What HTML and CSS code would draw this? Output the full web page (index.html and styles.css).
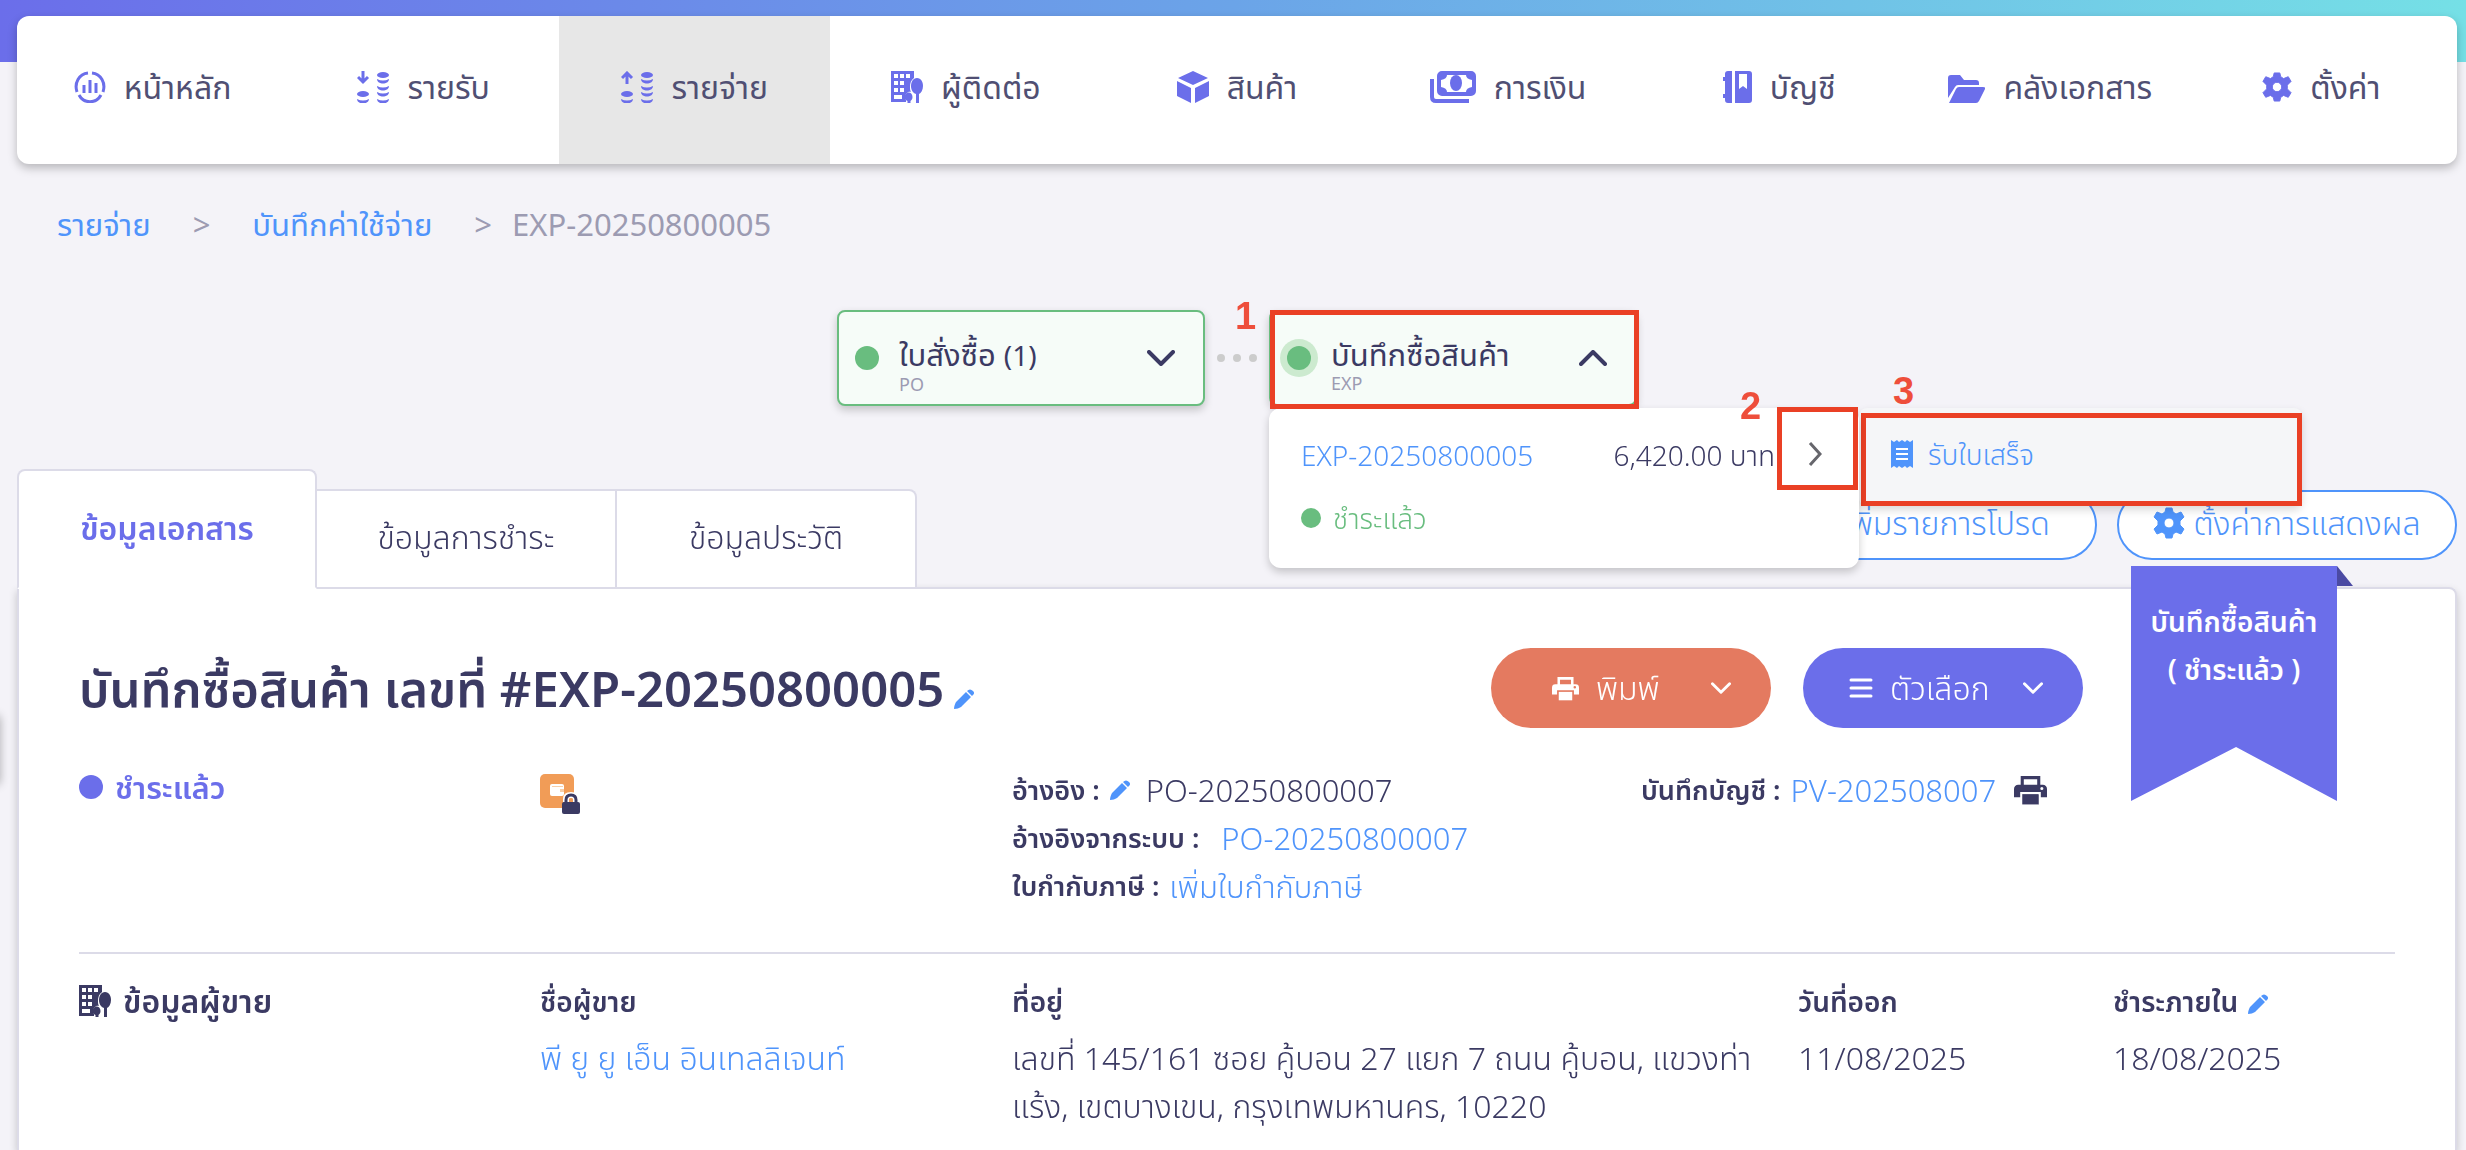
FILE: index.html
```html
<!DOCTYPE html>
<html lang="th">
<head>
  <meta charset="UTF-8">
  <meta name="viewport" content="width=device-width, initial-scale=1.0">
  <title>บันทึกซื้อสินค้า #EXP-20250800005</title>
  <link rel="stylesheet" href="styles.css">
</head>
<body>
  <!-- shared icons -->
  <svg class="sprite" aria-hidden="true">
    <symbol id="i-building" viewBox="0 0 32 32">
      <path fill="currentColor" fill-rule="evenodd" d="M0 0h23v7c-3 2-4 5-4 9 0 2 0 3 1 5-3-1-6 2-6 5 0 1 0 2 1 3v2H0zM3 3v4h4V3zm6 0v4h4V3zm6 0v4h4V3zM3 10v4h4v-4zm6 0v4h4v-4zM3 17v4h4v-4zm6 0v4h4v-4zM3 24v4h8v-4z"/>
      <path fill="currentColor" d="M26 7c4 0 6 4 6 8s-2 7-4 8v9h-3v-9c-3-1-5-4-5-8s2-8 6-8zM17.500 21.500c2.500 0 4 2 4 4.500s-1 3-2 4v2h-3v-2c-2-1-3-2-3-4s1.500-4.500 4-4.500z"/>
    </symbol>
    <symbol id="i-gear" viewBox="0 0 32 32">
      <path fill="currentColor" fill-rule="evenodd" stroke="currentColor" stroke-width="1" stroke-linejoin="round" d="M13 1h6l1 4 3 2 5-2 3 5-4 4v4l4 4-3 5-5-2-3 2-1 4h-6l-1-4-3-2-5 2-3-5 4-4v-4l-4-4 3-5 5 2 3-2zM16 11a5 5 0 1 0 0 10a5 5 0 1 0 0-10z"/>
    </symbol>
    <symbol id="i-printer" viewBox="0 0 32 28">
      <path fill="none" stroke="currentColor" stroke-width="3" d="M8 11V2h16v9"/>
      <path fill="currentColor" fill-rule="evenodd" d="M4 9h24a4 4 0 0 1 4 4v8h-6v-5H6v5H0v-8a4 4 0 0 1 4-4zM27 11a1 1 0 1 0 0 3a1 1 0 1 0 0-3z"/>
      <path fill="currentColor" d="M8 18h16v10H8z"/>
    </symbol>
    <symbol id="i-pencil" viewBox="0 0 20 20">
      <path fill="currentColor" d="M12 3l5 5L7 18c-2 1-4 2-7 2 0-3 1-5 2-7zM13 2c2-2 4-2 6 0s1 3-1 5z"/>
    </symbol>
    <symbol id="i-down" viewBox="0 0 28 16">
      <path fill="none" stroke="currentColor" stroke-width="4" stroke-linecap="round" stroke-linejoin="round" d="M2 2l12 12L26 2"/>
    </symbol>
    <symbol id="i-coins" viewBox="0 0 32 32">
      <ellipse cx="26" cy="4" rx="6" ry="3" fill="currentColor"/>
      <ellipse cx="6" cy="23" rx="6" ry="3" fill="currentColor"/>
      <path fill="currentColor" d="M20 8q6 3 12 0c0 6-12 6-12 0zM20 15q6 3 12 0c0 6-12 6-12 0zM20 21q6 3 12 0c0 6-12 6-12 0zM20 28q6 3 12 0c0 6-12 6-12 0zM0 28q6 3 12 0c0 6-12 6-12 0z"/>
    </symbol>
  </svg>

  <div class="side-handle"></div>

  <header class="topbar">
    <nav class="menu">
      <a href="#"><svg width="32" height="32" viewBox="0 0 32 32" fill="none" stroke="currentColor" stroke-width="3"><path d="M14 2C5 3 0 12 3 21M18 2c9 1 14 10 11 19M5 24c5 9 17 9 22 0"/><path d="M10 22v-8M16 22V9M22 22V12"/></svg>หน้าหลัก</a>
      <a href="#"><svg width="32" height="32" viewBox="0 0 32 32"><use href="#i-coins"/><path fill="none" stroke="currentColor" stroke-width="3" d="M6 0v11M1 6l5 5 5-5"/></svg>รายรับ</a>
      <a href="#" class="active"><svg width="32" height="32" viewBox="0 0 32 32"><use href="#i-coins"/><path fill="none" stroke="currentColor" stroke-width="3" d="M6 13V2M1 7l5-5 5 5"/></svg>รายจ่าย</a>
      <a href="#"><svg width="32" height="32"><use href="#i-building"/></svg>ผู้ติดต่อ</a>
      <a href="#"><svg width="32" height="32" viewBox="0 0 32 32" fill="currentColor"><path d="M16 0l15 7-15 7L1 7zM0 10l14 7v15L0 25zM32 10l-14 7v15l14-7z"/></svg>สินค้า</a>
      <a href="#"><svg width="46" height="32" viewBox="0 0 46 32" fill="none" stroke="currentColor"><rect x="9" y="2" width="35" height="21" rx="3" stroke-width="4"/><path stroke-width="4" d="M2 8v18q0 4 4 4h33"/><path fill="currentColor" stroke="none" d="M11 4h6q0 4-6 5zM42 4h-6q0 4 6 5zM11 21h6q0-4-6-5zM42 21h-6q0-4 6-5z"/><ellipse cx="26" cy="12" rx="6" ry="8" fill="currentColor" stroke="none"/></svg>การเงิน</a>
      <a href="#"><svg width="29" height="32" viewBox="0 0 29 32" fill="currentColor"><path fill-rule="evenodd" d="M5 0h4v32H5q-3 0-3-3v-2H0v-4h2V10H0V6h2V3q0-3 3-3zM12 0h14q3 0 3 3v26q0 3-3 3H12zM16 3v15l4-3 4 3V3z"/></svg>บัญชี</a>
      <a href="#"><svg width="37" height="32" viewBox="0 0 37 32" fill="currentColor"><path d="M3 4h9l4 5h12q3 0 3 3v2H10q-2 0-3 2L0 27V7q0-3 3-3zM11 16h24q3 0 2 2l-6 12q-1 2-3 2H1l7-14q1-2 3-2z"/></svg>คลังเอกสาร</a>
      <a href="#"><svg width="30" height="32"><use href="#i-gear"/></svg>ตั้งค่า</a>
    </nav>
  </header>

  <nav class="breadcrumb">
    <a href="#">รายจ่าย</a><span class="sep">&gt;</span>
    <a href="#">บันทึกค่าใช้จ่าย</a><span class="sep last">&gt;</span>
    <span>EXP-20250800005</span>
  </nav>

  <section class="steps">
    <button class="step">
      <span class="dot"></span>
      <span class="step-name">ใบสั่งซื้อ <span class="count">(1)</span><small>PO</small></span>
      <svg width="28" height="16"><use href="#i-down"/></svg>
    </button>
    <span class="more"><i></i><i></i><i></i></span>
    <div class="step-wrap">
      <button class="step">
        <span class="dot current"></span>
        <span class="step-name">บันทึกซื้อสินค้า<small>EXP</small></span>
        <svg class="flip" width="28" height="16"><use href="#i-down"/></svg>
      </button>
      <div class="mark mark-1"><b>1</b></div>
      <div class="dropdown">
        <div class="drop-row">
          <a href="#">EXP-20250800005</a>
          <span class="amount">6,420.00 บาท</span>
          <button class="expand" aria-label="เปิดเมนู"><svg width="14" height="24" viewBox="0 0 14 24" fill="none" stroke="#66666c" stroke-width="3"><path d="M2 1l10 11L2 23"/></svg></button>
        </div>
        <p class="paid"><span class="dot small"></span>ชำระแล้ว</p>
        <div class="mark mark-2"><b>2</b></div>
      </div>
      <div class="submenu">
        <a href="#"><svg width="22" height="28" viewBox="0 0 22 28"><path fill="currentColor" d="M0 0l3 2 3-2 2 2 3-2 3 2 2-2 3 2 3-2v28l-3-2-3 2-2-2-3 2-3-2-2 2-3-2-3 2z"/><path stroke="#fff" stroke-width="2" d="M5 9h12M5 14h12M5 19h12"/></svg>รับใบเสร็จ</a>
        <div class="mark mark-3"><b>3</b></div>
      </div>
    </div>
  </section>

  <main class="document">
    <div class="tools">
      <div class="tabs">
        <button class="tab active">ข้อมูลเอกสาร</button>
        <button class="tab">ข้อมูลการชำระ</button>
        <button class="tab">ข้อมูลประวัติ</button>
      </div>
      <div class="actions">
        <button class="outline"><svg width="30" height="30" viewBox="0 0 30 30"><path fill="currentColor" d="M15 1l4 10h10l-8 7 3 11-9-6-9 6 3-11-8-7h10z"/></svg>เพิ่มรายการโปรด</button>
        <button class="outline"><svg width="32" height="32"><use href="#i-gear"/></svg>ตั้งค่าการแสดงผล</button>
      </div>
    </div>

    <div class="panel">
      <div class="ribbon"><div class="ribbon-text">บันทึกซื้อสินค้า<br>( ชำระแล้ว )</div></div>

      <div class="title-row">
        <h1>บันทึกซื้อสินค้า เลขที่ #EXP-20250800005<svg class="edit" width="20" height="20"><use href="#i-pencil"/></svg></h1>
        <button class="pill print"><svg width="27" height="25"><use href="#i-printer"/></svg>พิมพ์<svg class="caret" width="20" height="12"><use href="#i-down"/></svg></button>
        <button class="pill option"><svg width="24" height="20" viewBox="0 0 24 20" stroke="currentColor" stroke-width="3" stroke-linecap="round"><path d="M2 2h20M2 10h20M2 18h20"/></svg>ตัวเลือก<svg class="caret" width="20" height="12"><use href="#i-down"/></svg></button>
      </div>

      <div class="info">
        <div class="status"><span class="dot"></span>ชำระแล้ว</div>
        <div class="flag"><svg width="42" height="42" viewBox="0 0 42 42"><rect width="34" height="34" rx="5" fill="#f19c57"/><path fill="#fff" d="M10 12q0-2 2-2h10q2 0 2 2v8q0 2-2 2H12q-2 0-2-2z"/><path fill="#f8cfa9" d="M20 15h4v3h-4zM12 12h11v1H12z"/><path fill="none" stroke="#fff" stroke-width="6" d="M26 28v-3q0-4 5-4t5 4v3"/><path fill="none" stroke="#3b3a63" stroke-width="3" d="M26 30v-4q0-5 5-5t5 5v4"/><rect x="22" y="28" width="18" height="12" rx="2" fill="#3b3a63"/></svg></div>
        <div class="refs">
          <p><b>อ้างอิง :</b><svg class="edit" width="20" height="20"><use href="#i-pencil"/></svg><span>PO-20250800007</span></p>
          <p><b>อ้างอิงจากระบบ :</b><a class="far" href="#">PO-20250800007</a></p>
          <p><b>ใบกำกับภาษี :</b><a href="#">เพิ่มใบกำกับภาษี</a></p>
        </div>
        <div class="refs">
          <p><b>บันทึกบัญชี :</b><a href="#">PV-202508007</a><svg class="doc-print" width="33" height="30"><use href="#i-printer"/></svg></p>
        </div>
      </div>

      <div class="vendor">
        <h2><svg width="32" height="32"><use href="#i-building"/></svg>ข้อมูลผู้ขาย</h2>
        <div><h3>ชื่อผู้ขาย</h3><a href="#">พี ยู ยู เอ็น อินเทลลิเจนท์</a></div>
        <div><h3>ที่อยู่</h3><p>เลขที่ 145/161 ซอย คู้บอน 27 แยก 7 ถนน คู้บอน, แขวงท่าแร้ง, เขตบางเขน, กรุงเทพมหานคร, 10220</p></div>
        <div><h3>วันที่ออก</h3><p>11/08/2025</p></div>
        <div><h3>ชำระภายใน<svg class="edit" width="20" height="20"><use href="#i-pencil"/></svg></h3><p>18/08/2025</p></div>
      </div>
    </div>
  </main>
</body>
</html>
```
FILE: styles.css
```css
* {
  box-sizing: border-box;
}
body {
  margin: 0;
  min-height: 100vh;
  display: flex;
  flex-direction: column;
  background-color: #f4f3f8;
  color: #3b3a63;
  font-family: "Noto Sans", "Noto Sans Thai", sans-serif;
  font-size: 32px;
  font-weight: 300;
  line-height: 48px;
}
a {
  color: #4f94fb;
  text-decoration: none;
}
button {
  font: inherit;
  color: inherit;
  cursor: pointer;
}
h1, h2, h3, p {
  margin: 0;
}
svg {
  flex-shrink: 0;
}
.sprite {
  position: absolute;
  width: 0;
  height: 0;
}
.side-handle {
  position: fixed;
  top: 715px;
  left: -10px;
  width: 10px;
  height: 70px;
  border-radius: 8px;
  box-shadow: 0 0 10px rgba(0,0,0,0.3);
}

/* menu */
.topbar {
  padding: 16px 9px 0 17px;
  background: linear-gradient(90deg, #6b6eea, #6ba4e8 50%, #75e0e6) top / 100% 62px no-repeat;
}
.menu {
  display: flex;
  height: 148px;
  background: #fff;
  border-radius: 12px;
  box-shadow: 0 4px 10px rgba(0,0,0,0.25);
  overflow: hidden;
}
.menu a {
  flex: 1;
  display: flex;
  align-items: center;
  justify-content: center;
  gap: 18px;
  padding-bottom: 7px;
  color: #504f73;
  font-weight: 400;
  white-space: nowrap;
}
.menu a.active {
  background: #e7e7e7;
}
.menu svg {
  color: #6b6eea;
}

.breadcrumb {
  display: flex;
  padding: 36px 57px 0;
  color: #9c9bb2;
  font-size: 31px;
  font-weight: 400;
}
.sep {
  margin: 0 42px;
}
.sep.last {
  margin-right: 20px;
}

/* document steps */
.steps {
  display: flex;
  align-items: center;
  justify-content: center;
  margin-top: 62px;
  padding: 0 9px 0 17px;
}
.step {
  display: flex;
  align-items: center;
  width: 368px;
  height: 96px;
  padding: 0 28px 0 16px;
  background: #f6fcf8;
  border: 2px solid #69bd7f;
  border-radius: 8px;
  box-shadow: 0 4px 8px rgba(0,0,0,0.2);
  text-align: left;
}
.dot {
  flex-shrink: 0;
  width: 24px;
  height: 24px;
  border-radius: 50%;
  background: #69bd7f;
}
.dot.current {
  box-shadow: 0 0 0 7px #cceacf;
}
.dot.small {
  width: 20px;
  height: 20px;
}
.step-name {
  flex: 1;
  padding-top: 10px;
  margin-left: 20px;
  font-size: 31px;
  font-weight: 400;
  line-height: 40px;
  white-space: nowrap;
}
.count {
  font-size: 28px;
}
.step-name small {
  display: block;
  font-size: 18px;
  line-height: 18px;
  color: #9c9bb2;
}
.flip {
  transform: rotate(180deg);
}
.more {
  display: flex;
  gap: 8px;
  margin: 0 12px;
}
.more i {
  width: 8px;
  height: 8px;
  border-radius: 50%;
  background: #ccc;
}
.step-wrap {
  position: relative;
}
.dropdown {
  position: absolute;
  z-index: 3;
  top: 98px;
  left: 0;
  width: 590px;
  height: 160px;
  padding: 22px 0 0 32px;
  background: #fff;
  border-radius: 12px;
  box-shadow: 0 4px 8px rgba(0,0,0,0.2);
  font-size: 28px;
}
.drop-row {
  display: flex;
  align-items: center;
  height: 50px;
}
.amount {
  margin-left: auto;
  white-space: nowrap;
}
.expand {
  width: 84px;
  padding: 0 4px 0 0;
  border: 0;
  background: none;
}
.paid {
  display: flex;
  align-items: center;
  gap: 12px;
  margin-top: 14px;
  color: #69bd7f;
}
.submenu {
  position: absolute;
  z-index: 2;
  top: 98px;
  left: 590px;
  width: 443px;
  height: 98px;
  padding: 22px 32px;
  background: #f5f6f8;
  border-radius: 8px;
  box-shadow: 0 4px 8px rgba(0,0,0,0.15);
  font-size: 28px;
}
.submenu a {
  display: flex;
  align-items: center;
  gap: 15px;
}

/* numbered red frames */
.mark {
  position: absolute;
  z-index: 4;
  border: 5px solid #ea4025;
  pointer-events: none;
}
.mark b {
  position: absolute;
  color: #ee4e3b;
  font: bold 38px/38px "Liberation Sans", Arial, sans-serif;
}
.mark-1 {
  inset: 0 -2px -3px 1px;
}
.mark-1 b {
  left: -40px;
  top: -18px;
}
.mark-2 {
  top: -1px;
  right: 1px;
  width: 81px;
  height: 83px;
}
.mark-2 b {
  left: -42px;
  top: -25px;
}
.mark-3 {
  inset: 5px 0 0 2px;
}
.mark-3 b {
  left: 27px;
  top: -46px;
}

/* tabs and actions */
.document {
  flex: 1;
  display: flex;
  flex-direction: column;
  padding: 0 9px 0 17px;
  margin-top: 63px;
}
.tools {
  display: flex;
  justify-content: space-between;
  align-items: flex-end;
}
.tabs {
  display: flex;
  align-items: flex-end;
  position: relative;
  z-index: 1;
  margin-bottom: -2px;
}
.tab {
  width: 300px;
  height: 100px;
  padding: 0 0 4px;
  background: #fff;
  border: 2px solid #dcdbe8;
  border-left: 0;
}
.tab:last-child {
  border-top-right-radius: 8px;
}
.tab.active {
  height: 120px;
  padding-bottom: 2px;
  border-left: 2px solid #dcdbe8;
  border-bottom-color: #fff;
  border-radius: 8px 8px 0 0;
  color: #6b6eea;
  font-weight: 600;
}
.actions {
  display: flex;
  gap: 20px;
  margin-bottom: 27px;
}
.outline {
  display: flex;
  align-items: center;
  justify-content: center;
  gap: 8px;
  width: 340px;
  height: 70px;
  padding: 0 0 4px;
  background: #fff;
  border: 2px solid #4f94fb;
  border-radius: 35px;
  color: #4f94fb;
  white-space: nowrap;
}

.panel {
  position: relative;
  flex: 1;
  padding: 59px 60px 0;
  background: #fff;
  border: 2px solid #dcdbe8;
  border-bottom: 0;
  border-radius: 0 8px 0 0;
  box-shadow: 0 4px 8px rgba(0,0,0,0.2);
}
.ribbon {
  position: absolute;
  top: -23px;
  right: 118px;
}
.ribbon-text {
  width: 206px;
  height: 235px;
  padding-top: 31px;
  background: #6b6eea;
  clip-path: polygon(0 0, 100% 0, 100% 100%, 51% 77%, 0 100%);
  color: #fff;
  font-size: 28px;
  font-weight: 600;
  text-align: center;
  white-space: nowrap;
}
.ribbon::after {
  content: "";
  position: absolute;
  top: 0;
  left: 100%;
  width: 16px;
  height: 20px;
  background: #4b4aa3;
  clip-path: polygon(0 0, 100% 100%, 0 100%);
}

.title-row {
  display: flex;
  align-items: center;
  gap: 32px;
  height: 80px;
  padding-right: 312px;
}
h1 {
  flex: 1;
  font-size: 49px;
  font-weight: 600;
  white-space: nowrap;
}
.edit {
  color: #4f94fb;
}
h1 .edit, h3 .edit {
  margin-left: 10px;
  vertical-align: -2px;
}
.pill {
  display: flex;
  align-items: center;
  gap: 17px;
  width: 280px;
  height: 80px;
  padding: 0 40px 0 46px;
  border: 0;
  border-radius: 40px;
  color: #fff;
}
.caret {
  margin-left: auto;
}
.print {
  padding-left: 61px;
  background: #e47a60;
}
.option {
  background: #6b6eea;
}

/* status and references */
.info {
  display: grid;
  grid-template-columns: 461fr 472fr 629fr 754fr;
  padding: 38px 0 42px;
  border-bottom: 2px solid #dcdbe8;
}
.status {
  display: flex;
  align-items: center;
  gap: 12px;
  height: 42px;
  color: #6b6eea;
  font-size: 31px;
  font-weight: 600;
}
.status .dot {
  background: #6b6eea;
}
.flag {
  padding-top: 8px;
}
.refs p {
  display: flex;
  align-items: center;
  white-space: nowrap;
  gap: 10px;
  font-size: 31px;
}
.refs b {
  font-size: 27px;
  font-weight: 600;
}
.refs span {
  margin-left: 6px;
}
.far {
  margin-left: 12px;
}
.doc-print {
  margin-left: 8px;
}

.vendor {
  display: grid;
  grid-template-columns: 461fr 472fr 786fr 315fr 282fr;
  padding-top: 23px;
}
h2 {
  display: flex;
  align-items: center;
  gap: 12px;
  height: 48px;
  font-size: 32px;
  font-weight: 600;
}
h3 {
  height: 57px;
  font-size: 28px;
  font-weight: 600;
}
.vendor p {
  padding-right: 40px;
}
```
